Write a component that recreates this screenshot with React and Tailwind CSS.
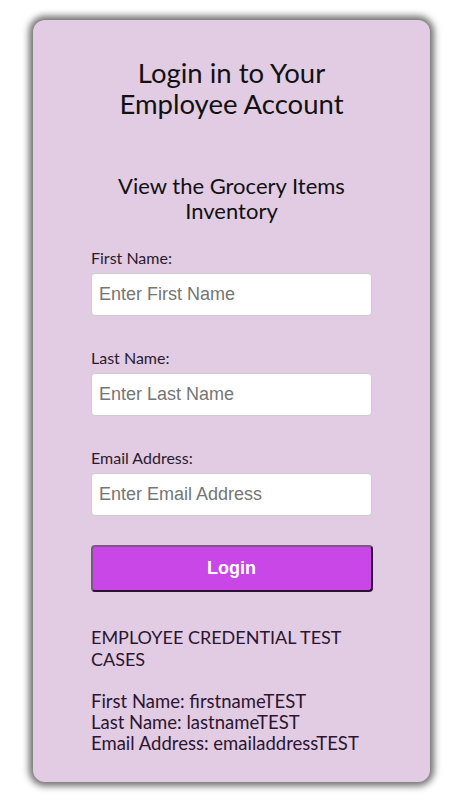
import React from "react";

function Field({ label, placeholder }) {
  return (
    <div className="flex flex-col">
      <label className="text-[16px] leading-[18px] text-[#2a1a2e] font-['Lato',sans-serif]">{label}</label>
      <input
        className="mt-[6px] h-[43px] w-full rounded-[4px] border border-[#cccccc] bg-white px-[7px] text-[18px] text-[#333] placeholder:text-[#757575] font-['Liberation_Sans',Arial,sans-serif] outline-none"
        placeholder={placeholder}
      />
    </div>
  );
}

export default function App() {
  return (
    <div className="w-[453px] h-[807px] bg-white pt-[20px] pl-[33px]">
      <div className="w-[397px] h-[762px] rounded-[12px] bg-[#e2cce3] shadow-[0_0_7px_4px_#6f6f6f] flex flex-col items-center font-['Lato',sans-serif]">
        <h1 className="mt-[37px] text-center text-[27.5px] leading-[31px] text-[#111]">
          Login in to Your
          <br />
          Employee Account
        </h1>
        <h2 className="mt-[54px] text-center text-[22px] leading-[25px] text-[#111]">
          View the Grocery Items
          <br />
          Inventory
        </h2>
        <div className="mt-[26px] w-[281px] flex flex-col gap-[33px]">
          <Field label="First Name:" placeholder="Enter First Name" />
          <Field label="Last Name:" placeholder="Enter Last Name" />
          <Field label="Email Address:" placeholder="Enter Email Address" />
        </div>
        <button className="mt-[29px] w-[282px] h-[47px] rounded-[4px] bg-[#c847e6] border-2 border-solid border-t-[#7a5a80] border-l-[#7a5a80] border-r-[#2e0f36] border-b-[#2e0f36] text-white font-bold text-[18px] font-['Liberation_Sans',Arial,sans-serif]">
          Login
        </button>
        <div className="mt-[34px] w-[281px] text-[#2b1530]">
          <p className="leading-[22px] text-[18px]">EMPLOYEE CREDENTIAL TEST CASES</p>
          <div className="mt-[21px] leading-[21px] text-[18.5px]">
            <p>First Name: firstnameTEST</p>
            <p>Last Name: lastnameTEST</p>
            <p>Email Address: emailaddressTEST</p>
          </div>
        </div>
      </div>
    </div>
  );
}
